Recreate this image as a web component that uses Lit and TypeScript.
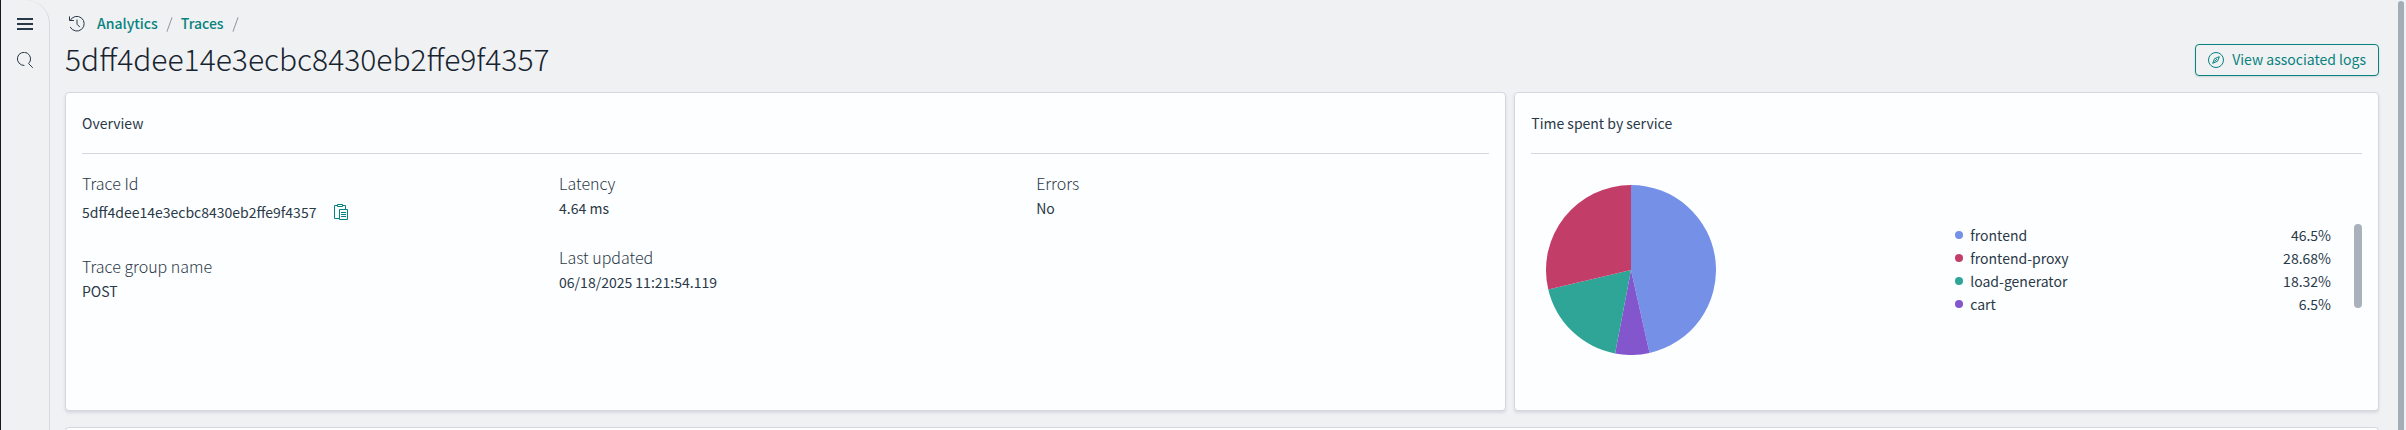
import { LitElement, html, svg, css } from "lit";
import { customElement, property } from "lit/decorators.js";

interface Service {
  name: string;
  percent: number;
  color: string;
}

const SERVICES: Service[] = [
  { name: "frontend", percent: 46.5, color: "#7491e7" },
  { name: "frontend-proxy", percent: 28.68, color: "#c33d69" },
  { name: "load-generator", percent: 18.32, color: "#2ea597" },
  { name: "cart", percent: 6.5, color: "#8456ce" },
];

const TRACE_ID = "5dff4dee14e3ecbc8430eb2ffe9f4357";

const menuIcon = svg`<svg width="16" height="16" viewBox="0 0 16 16" fill="currentColor" aria-hidden="true">
  <path d="M0 2h16v2H0zM0 7h16v2H0zM0 12h16v2H0z"/></svg>`;

const searchIcon = svg`<svg width="16" height="16" viewBox="0 0 16 16" fill="none" stroke="currentColor" stroke-linecap="round" aria-hidden="true">
  <path d="M7 13.5A6.6 6.6 0 1 1 11.6 11.6L15.5 15.5"/></svg>`;

const recentIcon = svg`<svg width="16" height="16" viewBox="0 0 16 16" fill="none" stroke="currentColor" stroke-linecap="round" stroke-linejoin="round" aria-hidden="true">
  <path d="M.5.8v3.7h4M1.2 4.3A7.4 7.4 0 1 1 1.3 11.3M8 4v4.2l2.6 2.6"/></svg>`;

const compassIcon = svg`<svg width="16" height="16" viewBox="0 0 16 16" fill="none" stroke="currentColor" stroke-linejoin="round" aria-hidden="true">
  <circle cx="8" cy="8" r="7.5"/><path d="M11.3 4.7L9.6 9.2 4.7 11.3 6.6 6.6zM6.6 9.4L9 7"/></svg>`;

const copyIcon = svg`<svg width="14" height="16" viewBox="0 0 14 16" fill="none" stroke="currentColor" aria-hidden="true">
  <path d="M3.500 1.500H.5v13h5M9 1.500h2.500V5M3.500.5h5v2h-5zM5.500 5.500h8v10h-8zM7 8.500h5M7 10.500h5M7 12.500h5"/></svg>`;

@customElement("service-pie")
class ServicePie extends LitElement {
  @property({ attribute: false }) services: Service[] = [];

  static styles = css`
    :host { display: block; }
    .pie { display: block; }
  `;

  render() {
    const [first, ...others] = this.services;
    const ordered = first ? [first, ...others.reverse()] : [];
    const point = (share: number) => {
      const angle = (share / 100) * 2 * Math.PI;
      return `${85 + 85 * Math.sin(angle)} ${85 - 85 * Math.cos(angle)}`;
    };
    let start = 0;
    return html`<svg class="pie" width="170" height="170" viewBox="0 0 170 170" role="img" aria-label="Time spent by service">
      ${ordered.map((s) => {
        const from = start;
        start += s.percent;
        return svg`<path fill=${s.color} d="M85 85L${point(from)}A85 85 0 ${s.percent > 50 ? 1 : 0} 1 ${point(start)}Z"/>`;
      })}
    </svg>`;
  }
}

@customElement("app-root")
class AppRoot extends LitElement {
  static styles = css`
    :host {
      display: flex;
      box-sizing: border-box;
      height: 100vh;
      overflow: hidden;
      border-left: 1px solid #16181d;
      background: #f0f1f3;
      color: #2a3947;
      font-family: "Noto Sans CJK SC", "Noto Sans", sans-serif;
      font-size: 14px;
      line-height: 24px;
    }
    * { box-sizing: border-box; }
    svg { display: block; flex: none; }
    button { padding: 0; border: 0; background: none; color: inherit; font: inherit; cursor: pointer; }
    .rail {
      flex: none;
      display: flex;
      flex-direction: column;
      align-items: center;
      gap: 20px;
      width: 49px;
      padding-top: 16px;
      border: solid #d6d9de;
      border-width: 0 1px 0 0;
      border-top-right-radius: 24px;
    }
    .main { flex: 1; min-width: 0; padding: 12px 17px 0 15px; }
    .crumbs { display: flex; align-items: center; padding-left: 4px; }
    .crumbs a { padding-bottom: 2px; line-height: 22px; color: #07827e; text-decoration: none; font-weight: 500; }
    .crumbs .recent { margin-right: 12px; }
    .slash { width: 1px; height: 15px; margin: 0 11px; background: #8f979f; transform: rotate(20deg); }
    .head { display: flex; align-items: center; justify-content: space-between; height: 48px; margin-bottom: 8px; }
    .title { margin: 0; padding-bottom: 4px; color: #172430; font-size: 30px; line-height: 44px; font-weight: 300; }
    .logs {
      display: flex;
      align-items: center;
      gap: 8px;
      height: 32px;
      padding: 0 12px;
      border: 1px solid #07827e;
      border-radius: 4px;
      color: #07827e;
      box-shadow: 0 1px 2px rgba(30, 50, 70, 0.15);
    }
    .logs-label { padding-bottom: 2px; }
    .cards { display: grid; grid-template-columns: 5fr 3fr; gap: 8px; margin-bottom: 16px; }
    .card {
      min-width: 0;
      min-height: 319px;
      padding: 16px;
      border: 1px solid #d3d7de;
      border-radius: 4px;
      background: #fdfeff;
      box-shadow: 0 2px 3px rgba(30, 50, 80, 0.12);
    }
    .card-title { margin: 0; padding: 2px 0 18px; border-bottom: 1px solid #d3d7de; font-size: 14px; font-weight: 400; }
    .facts { display: grid; grid-template-columns: repeat(3, 1fr); gap: 24px; padding-top: 17px; }
    .facts dl { margin: 0; }
    .facts dt { font-size: 16px; font-weight: 300; }
    .facts dd { display: flex; align-items: center; gap: 18px; margin: 0 0 25px; padding-top: 1px; }
    .facts dd.copyable { height: 34px; padding-bottom: 1px; }
    .copy { color: #07827e; }
    .usage { display: grid; grid-template-columns: 409px 1fr 8px; align-items: center; height: 232px; padding-left: 15px; }
    .legend-box { padding-right: 23px; }
    .legend { border-collapse: collapse; width: 100%; }
    .legend td { padding: 0 0 1px; height: 23px; line-height: 22px; }
    .legend .share { text-align: right; }
    .legend .dot-cell { width: 15px; }
    .dot { display: block; width: 8px; height: 8px; border-radius: 50%; }
    .thumb { height: 84px; margin-bottom: 8px; border-radius: 4px; background: #a9b1bb; }
    .page-scroll { flex: none; width: 10px; padding: 1px 2px 0; }
    .page-thumb { height: 100%; border-radius: 3px 3px 0 0; background: #a3adb5; }
  `;

  render() {
    return html`
      <nav class="rail" aria-label="Main">
        <button aria-label="Menu">${menuIcon}</button>
        <button aria-label="Search">${searchIcon}</button>
      </nav>
      <main class="main">
        <nav class="crumbs" aria-label="Breadcrumbs">
          <button class="recent" aria-label="Recent">${recentIcon}</button>
          <a href="#analytics">Analytics</a><span class="slash"></span>
          <a href="#traces">Traces</a><span class="slash"></span>
        </nav>
        <header class="head">
          <h1 class="title">${TRACE_ID}</h1>
          <button class="logs">${compassIcon}<span class="logs-label">View associated logs</span></button>
        </header>
        <div class="cards">
          <section class="card">
            <h2 class="card-title">Overview</h2>
            <div class="facts">
              <dl>
                <dt>Trace Id</dt>
                <dd class="copyable">${TRACE_ID}<button class="copy" aria-label="Copy">${copyIcon}</button></dd>
                <dt>Trace group name</dt>
                <dd>POST</dd>
              </dl>
              <dl>
                <dt>Latency</dt>
                <dd>4.64 ms</dd>
                <dt>Last updated</dt>
                <dd>06/18/2025 11:21:54.119</dd>
              </dl>
              <dl>
                <dt>Errors</dt>
                <dd>No</dd>
              </dl>
            </div>
          </section>
          <section class="card">
            <h2 class="card-title">Time spent by service</h2>
            <div class="usage">
              <service-pie .services=${SERVICES}></service-pie>
              <div class="legend-box">
                <table class="legend">
                  <tbody>
                    ${SERVICES.map(
                      (s) => html`<tr>
                        <td class="dot-cell"><span class="dot" style="background:${s.color}"></span></td>
                        <td>${s.name}</td>
                        <td class="share">${s.percent}%</td>
                      </tr>`
                    )}
                  </tbody>
                </table>
              </div>
              <div class="thumb"></div>
            </div>
          </section>
        </div>
        <section class="card"></section>
      </main>
      <div class="page-scroll"><div class="page-thumb"></div></div>
    `;
  }
}
